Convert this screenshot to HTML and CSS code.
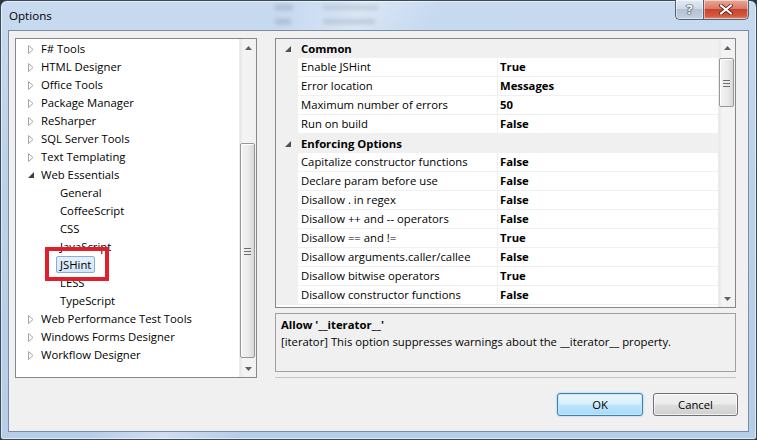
FILE: index.html
```html
<!DOCTYPE html>
<html lang="en">
<head>
    <meta charset="UTF-8">
    <title>Options</title>
    <link rel="stylesheet" href="styles.css">
</head>
<body>

<div class="window">
    <!-- glass caption -->
    <div class="titlebar">
        <span class="title">Options</span>
        <div class="behind">
            <span class="smudge s1"></span>
            <span class="smudge s2"></span>
            <span class="smudge s3"></span>
            <span class="smudge s4"></span>
        </div>
        <div class="caption-buttons">
            <div class="cap-btn help">?</div>
            <div class="cap-btn close">
                <svg width="14" height="11" viewBox="0 0 14 11">
                    <path d="M2 1.5 L12 9.5 M12 1.5 L2 9.5" stroke="#5a1f18" stroke-width="3.6" stroke-linecap="square"/>
                    <path d="M2 1.5 L12 9.5 M12 1.5 L2 9.5" stroke="#fff" stroke-width="2" stroke-linecap="square"/>
                </svg>
            </div>
        </div>
    </div>

    <div class="client">
        <div class="main">
            <!-- category tree -->
            <div class="tree">
                <ul class="nodes">
                    <li class="node"><span class="exp closed"></span><span class="label">F# Tools</span></li>
                    <li class="node"><span class="exp closed"></span><span class="label">HTML Designer</span></li>
                    <li class="node"><span class="exp closed"></span><span class="label">Office Tools</span></li>
                    <li class="node"><span class="exp closed"></span><span class="label">Package Manager</span></li>
                    <li class="node"><span class="exp closed"></span><span class="label">ReSharper</span></li>
                    <li class="node"><span class="exp closed"></span><span class="label">SQL Server Tools</span></li>
                    <li class="node"><span class="exp closed"></span><span class="label">Text Templating</span></li>
                    <li class="node"><span class="exp open"></span><span class="label">Web Essentials</span></li>
                    <li class="node child"><span class="exp"></span><span class="label">General</span></li>
                    <li class="node child"><span class="exp"></span><span class="label">CoffeeScript</span></li>
                    <li class="node child"><span class="exp"></span><span class="label">CSS</span></li>
                    <li class="node child"><span class="exp"></span><span class="label">JavaScript</span></li>
                    <li class="node child"><span class="exp"></span><span class="label selected">JSHint</span></li>
                    <li class="node child"><span class="exp"></span><span class="label">LESS</span></li>
                    <li class="node child"><span class="exp"></span><span class="label">TypeScript</span></li>
                    <li class="node"><span class="exp closed"></span><span class="label">Web Performance Test Tools</span></li>
                    <li class="node"><span class="exp closed"></span><span class="label">Windows Forms Designer</span></li>
                    <li class="node"><span class="exp closed"></span><span class="label">Workflow Designer</span></li>
                </ul>
                <div class="vscroll">
                    <div class="arrow up"></div>
                    <div class="track">
                        <div class="thumb tree-thumb"><span class="grip"></span></div>
                    </div>
                    <div class="arrow down"></div>
                </div>
                <div class="marker"></div>
            </div>

            <div class="side">
                <!-- property grid -->
                <div class="grid">
                    <div class="rows">
                        <div class="cat"><span class="cat-exp"></span><span class="cat-name">Common</span></div>
                        <div class="prop"><span class="gut"></span><span class="pname">Enable JSHint</span><span class="pval">True</span></div>
                        <div class="prop"><span class="gut"></span><span class="pname">Error location</span><span class="pval">Messages</span></div>
                        <div class="prop"><span class="gut"></span><span class="pname">Maximum number of errors</span><span class="pval">50</span></div>
                        <div class="prop"><span class="gut"></span><span class="pname">Run on build</span><span class="pval">False</span></div>
                        <div class="cat"><span class="cat-exp"></span><span class="cat-name">Enforcing Options</span></div>
                        <div class="prop"><span class="gut"></span><span class="pname">Capitalize constructor functions</span><span class="pval">False</span></div>
                        <div class="prop"><span class="gut"></span><span class="pname">Declare param before use</span><span class="pval">False</span></div>
                        <div class="prop"><span class="gut"></span><span class="pname">Disallow . in regex</span><span class="pval">False</span></div>
                        <div class="prop"><span class="gut"></span><span class="pname">Disallow ++ and -- operators</span><span class="pval">False</span></div>
                        <div class="prop"><span class="gut"></span><span class="pname">Disallow == and !=</span><span class="pval">True</span></div>
                        <div class="prop"><span class="gut"></span><span class="pname">Disallow arguments.caller/callee</span><span class="pval">False</span></div>
                        <div class="prop"><span class="gut"></span><span class="pname">Disallow bitwise operators</span><span class="pval">True</span></div>
                        <div class="prop"><span class="gut"></span><span class="pname">Disallow constructor functions</span><span class="pval">False</span></div>
                    </div>
                    <div class="vscroll">
                        <div class="arrow up"></div>
                        <div class="track">
                            <div class="thumb grid-thumb"><span class="grip"></span></div>
                        </div>
                        <div class="arrow down"></div>
                    </div>
                </div>

                <!-- help text under the grid -->
                <div class="desc">
                    <div class="desc-title">Allow '__iterator__'</div>
                    <div class="desc-text">[iterator] This option suppresses warnings about the __iterator__ property.</div>
                </div>
                <div class="sep"></div>
            </div>
        </div>

        <div class="buttons">
            <div class="btn default">OK</div>
            <div class="btn">Cancel</div>
        </div>
    </div>
</div>

</body>
</html>
```

FILE: styles.css
```css
* {
    box-sizing: border-box;
}
html, body {
    margin: 0;
    padding: 0;
    background: #2b3440;
}
body {
    width: 757px;
    height: 440px;
    overflow: hidden;
    font-family: "Open Sans", "Noto Sans", sans-serif;
    font-size: 11.3px;
    color: #000;
}

/* window frame */
.window {
    width: 757px;
    height: 440px;
    border: 1px solid #3d4a58;
    border-radius: 7px 7px 3px 3px;
    padding: 0 7px 7px 7px;
    display: flex;
    flex-direction: column;
    background:
        linear-gradient(115deg, rgba(255,255,255,0) 30%, rgba(255,255,255,0.35) 38%, rgba(255,255,255,0) 46%),
        linear-gradient(180deg, #c7daf0 0%, #bcd2ea 40%, #b6cde8 100%);
    box-shadow: inset 0 0 0 1px rgba(255,255,255,0.55);
}

.titlebar {
    height: 29px;
    position: relative;
    display: flex;
    align-items: center;
    flex-shrink: 0;
}
.title {
    padding-left: 1px;
    padding-bottom: 1px;
    font-size: 11.6px;
    color: #000;
}

/* blurred windows seen through the glass */
.behind {
    position: absolute;
    left: 255px;
    top: 0;
    width: 130px;
    height: 29px;
}
.smudge {
    position: absolute;
    height: 5px;
    background: #8a98aa;
    filter: blur(2px);
    opacity: 0.45;
}
.s1 { left: 12px; top: 4px; width: 18px; }
.s2 { left: 60px; top: 4px; width: 55px; opacity: 0.3; }
.s3 { left: 12px; top: 18px; width: 16px; }
.s4 { left: 60px; top: 18px; width: 52px; opacity: 0.35; }

.caption-buttons {
    position: absolute;
    right: 0;
    top: -1px;
    display: flex;
}
.cap-btn {
    height: 20px;
    border: 1px solid #4f6276;
    border-top: none;
    display: flex;
    align-items: center;
    justify-content: center;
    box-shadow: inset 0 0 0 1px rgba(255,255,255,0.5);
}
.help {
    width: 28px;
    border-radius: 0 0 0 5px;
    border-right: none;
    background: linear-gradient(180deg, #e3eaf3 0%, #cfd9e6 45%, #b3c1d3 50%, #c1cfde 100%);
    font-size: 13px;
    font-weight: bold;
    color: #fff;
    text-shadow: 0 0 1px #263a52, 0 0 1px #263a52, 0 0 2px #263a52;
    padding-bottom: 1px;
}
.close {
    width: 46px;
    border-radius: 0 0 5px 0;
    background: linear-gradient(180deg, #e9a797 0%, #dc7a68 45%, #c8432f 50%, #d35a3e 85%, #e2906f 100%);
}

/* client area */
.client {
    flex: 1;
    background: #f0f0f0;
    border: 1px solid #7a8da4;
    padding: 7px 0 0 6px;
    display: flex;
    flex-direction: column;
}
.main {
    display: flex;
    gap: 18px;
    height: 340px;
}

/* tree view */
.tree {
    position: relative;
    width: 242px;
    height: 340px;
    border: 1px solid #828790;
    background: #fff;
    display: flex;
}
.nodes {
    list-style: none;
    margin: 0;
    padding: 0;
    flex: 1;
}
.node {
    height: 18px;
    display: flex;
    align-items: center;
    padding-left: 12px;
    white-space: nowrap;
}
.node.child {
    padding-left: 31px;
}
.exp {
    width: 6px;
    height: 9px;
    margin-right: 3px;
    margin-top: 3px;
    flex-shrink: 0;
}
.exp.closed {
    background: url("data:image/svg+xml,%3Csvg xmlns='http://www.w3.org/2000/svg' width='6' height='9'%3E%3Cpath d='M0.5 0.5 L5 4.5 L0.5 8.5 Z' fill='%23fff' stroke='%23a6a6a6'/%3E%3C/svg%3E") no-repeat;
}
.exp.open {
    background: url("data:image/svg+xml,%3Csvg xmlns='http://www.w3.org/2000/svg' width='6' height='9'%3E%3Cpath d='M6 1 L6 7 L0 7 Z' fill='%23404040'/%3E%3C/svg%3E") no-repeat;
}
.label {
    padding: 0 3px;
    height: 17px;
    line-height: 15px;
    border: 1px solid transparent;
    border-radius: 2px;
}
.label.selected {
    background: linear-gradient(180deg, #e6f0fa, #d3e5f8);
    border-color: #84acdd;
}

/* red outline round the chosen page */
.marker {
    position: absolute;
    left: 29px;
    top: 208px;
    width: 64px;
    height: 34px;
    border: 4px solid #df1f2b;
}

/* scroll bars */
.vscroll {
    width: 17px;
    flex-shrink: 0;
    display: flex;
    flex-direction: column;
    background: linear-gradient(90deg, #e6e6e6 0%, #f4f4f4 20%, #f1f1f1 100%);
    border-left: 1px solid #ececec;
}
.arrow {
    height: 17px;
    flex-shrink: 0;
    background-repeat: no-repeat;
    background-position: center;
}
.arrow.up {
    background-image: url("data:image/svg+xml,%3Csvg xmlns='http://www.w3.org/2000/svg' width='7' height='4'%3E%3Cpath d='M0 4 L3.5 0 L7 4 Z' fill='%23606060'/%3E%3C/svg%3E");
}
.arrow.down {
    background-image: url("data:image/svg+xml,%3Csvg xmlns='http://www.w3.org/2000/svg' width='7' height='4'%3E%3Cpath d='M0 0 L3.5 4 L7 0 Z' fill='%23606060'/%3E%3C/svg%3E");
}
.track {
    flex: 1;
    position: relative;
    display: flex;
    flex-direction: column;
}
.thumb {
    width: 15px;
    border: 1px solid #979797;
    border-radius: 2px;
    background: linear-gradient(90deg, #f3f3f3 0%, #ececec 50%, #d8d8d8 100%);
    box-shadow: inset 1px 1px 0 #fff;
    display: flex;
    align-items: center;
    justify-content: center;
}
.tree-thumb {
    margin-top: 87px;
    height: 215px;
}
.grid-thumb {
    margin-top: 2px;
    height: 49px;
}
.grip {
    width: 7px;
    height: 7px;
    background: repeating-linear-gradient(180deg, #6d6d6d 0 1px, transparent 1px 3px);
    margin-top: 2px;
}

/* right column */
.side {
    width: 461px;
    display: flex;
    flex-direction: column;
}
.grid {
    height: 271px;
    border: 1px solid #828790;
    background: #fff;
    display: flex;
}
.rows {
    flex: 1;
}
.cat {
    height: 19px;
    background: #f0f0f0;
    display: flex;
    align-items: center;
    font-weight: bold;
}
.cat-exp {
    width: 6px;
    height: 6px;
    margin-left: 9px;
    margin-right: 10px;
    margin-top: 1px;
    background: url("data:image/svg+xml,%3Csvg xmlns='http://www.w3.org/2000/svg' width='6' height='6'%3E%3Cpath d='M6 0 L6 6 L0 6 Z' fill='%23505050'/%3E%3C/svg%3E") no-repeat;
}
.prop {
    height: 19px;
    display: grid;
    grid-template-columns: 22px 199px 1fr;
    line-height: 18px;
}
.gut {
    background: #f0f0f0;
}
.pname {
    padding-left: 3px;
    border-bottom: 1px solid #f0f0f0;
    white-space: nowrap;
}
.pval {
    padding-left: 2px;
    font-weight: bold;
    border-left: 1px solid #f0f0f0;
    border-bottom: 1px solid #f0f0f0;
}

.desc {
    margin-top: 5px;
    height: 59px;
    border: 1px solid #a0a0a0;
    background: #f0f0f0;
    padding: 2px 5px;
    line-height: 17px;
}
.desc-title {
    font-weight: bold;
}
.sep {
    margin-top: 5px;
    height: 0;
    border-top: 1px solid #c4c4c4;
}

/* dialog buttons */
.buttons {
    display: flex;
    justify-content: flex-end;
    gap: 10px;
    margin-top: 15px;
    padding-right: 10px;
}
.btn {
    width: 85px;
    height: 23px;
    border: 1px solid #707070;
    border-radius: 3px;
    background: linear-gradient(180deg, #f2f2f2 0%, #ebebeb 48%, #dddddd 52%, #cfcfcf 100%);
    box-shadow: inset 0 0 0 1px rgba(255,255,255,0.7);
    display: flex;
    align-items: center;
    justify-content: center;
}
.btn.default {
    width: 86px;
    border-color: #3c7fb1;
    background: linear-gradient(180deg, #eaf6fd 0%, #d9f0fc 48%, #bee6fd 52%, #a7d9f5 100%);
    box-shadow: inset 0 0 0 1px #c6e8f9, 0 0 2px #7ec1e8;
}
```
